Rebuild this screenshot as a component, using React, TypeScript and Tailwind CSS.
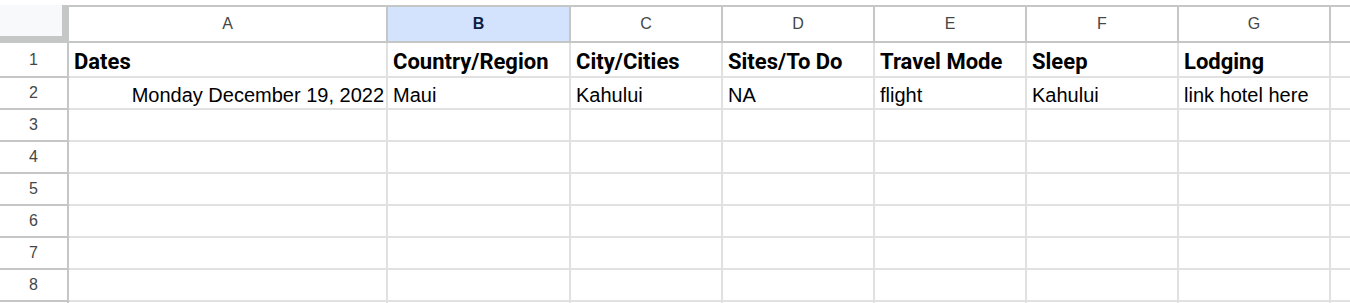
type Col = { letter: string; w: string; selected?: boolean };

const cols: Col[] = [
  { letter: "A", w: "w-[319px]" },
  { letter: "B", w: "w-[183px]", selected: true },
  { letter: "C", w: "w-[152px]" },
  { letter: "D", w: "w-[152px]" },
  { letter: "E", w: "w-[152px]" },
  { letter: "F", w: "w-[152px]" },
  { letter: "G", w: "w-[152px]" },
  { letter: "", w: "w-[152px]" },
];

const headings = ["Dates", "Country/Region", "City/Cities", "Sites/To Do", "Travel Mode", "Sleep", "Lodging", ""];
const firstRow = ["Monday December 19, 2022", "Maui", "Kahului", "NA", "flight", "Kahului", "link hotel here", ""];

function RowNumber({ n }: { n?: number }) {
  return (
    <div className="w-[69px] shrink-0 flex items-center justify-center border-r-2 border-b-2 border-[#c4c7c5] text-[16px] text-[#444746] font-['Liberation_Sans',Arial,sans-serif]">
      {n}
    </div>
  );
}

function ColumnHeader() {
  return (
    <div className="flex h-[38px]">
      {/* corner with freeze handles */}
      <div className="w-[69px] shrink-0 bg-[#c4c7c5] pr-[7px] pb-[7px]">
        <div className="w-full h-full bg-[#f8f9fa]" />
      </div>
      {cols.map((c, i) => (
        <div
          key={i}
          className={`${c.w} shrink-0 flex items-center justify-center border-t-2 border-b-2 border-r-2 border-[#c4c7c5] text-[16px] font-['Liberation_Sans',Arial,sans-serif] ${
            c.selected ? "bg-[#d3e3fd] text-[#0b1f45] font-bold" : "bg-white text-[#444746]"
          }`}
        >
          {c.letter}
        </div>
      ))}
    </div>
  );
}

export default function App() {
  return (
    <div className="w-[1350px] h-[303px] overflow-hidden bg-white pt-[5px]">
      <ColumnHeader />

      {/* row 1: bold headings */}
      <div className="flex h-[35px]">
        <RowNumber n={1} />
        {cols.map((c, i) => (
          <div
            key={i}
            className={`${c.w} shrink-0 flex items-end pl-[5px] pb-[3px] border-r-2 border-b-2 border-[#e1e1e1] overflow-hidden whitespace-nowrap text-[22px] leading-[22px] font-bold text-black font-['Roboto',Arial,sans-serif]`}
          >
            {headings[i]}
          </div>
        ))}
      </div>

      {/* row 2: first entry */}
      <div className="flex h-[32px]">
        <RowNumber n={2} />
        {cols.map((c, i) => (
          <div
            key={i}
            className={`${c.w} shrink-0 flex items-end pb-[2px] border-r-2 border-b-2 border-[#e1e1e1] overflow-hidden whitespace-nowrap text-[20px] leading-[22px] text-black font-['Liberation_Sans',Arial,sans-serif] ${
              i === 0 ? "justify-end pr-[2px]" : "pl-[5px]"
            }`}
          >
            {firstRow[i]}
          </div>
        ))}
      </div>

      {[3, 4, 5, 6, 7, 8, 0].map((n) => (
        <div key={n} className="flex h-[32px]">
          <RowNumber n={n || undefined} />
          {cols.map((c, i) => (
            <div key={i} className={`${c.w} shrink-0 border-r-2 border-b-2 border-[#e1e1e1]`} />
          ))}
        </div>
      ))}
    </div>
  );
}
